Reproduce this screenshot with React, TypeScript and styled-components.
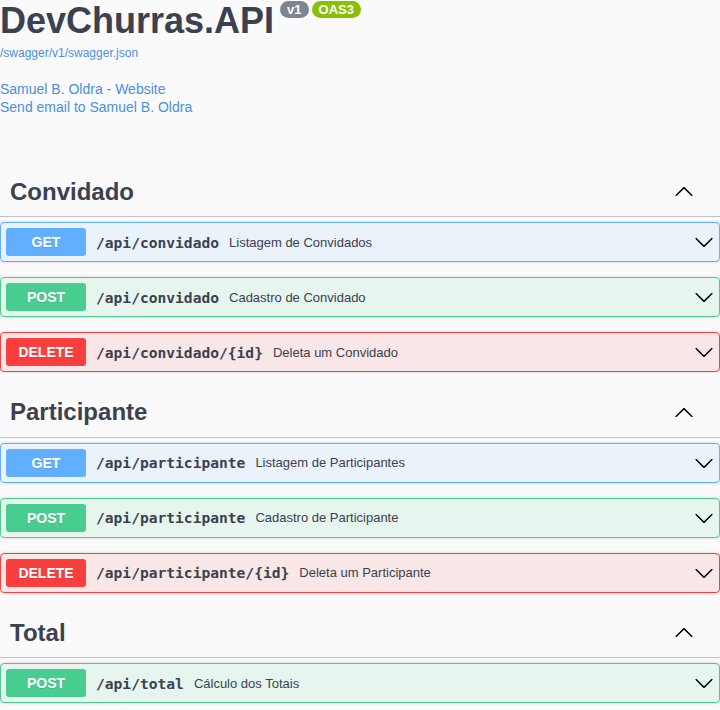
import React from "react";
import styled, { createGlobalStyle } from "styled-components";

const Global = createGlobalStyle`
  html, body { margin: 0; padding: 0; background: #fafafa; }
  body { font-family: "Liberation Sans", Arial, sans-serif; color: #3b4151; }
`;

const Page = styled.div`
  width: 720px;
  background: #fafafa;
`;

const Info = styled.div`
  margin: 0 0 50.5px;
`;

const TitleRow = styled.h2`
  display: flex;
  align-items: flex-start;
  margin: 0;
  font-size: 36px;
  font-weight: 700;
  line-height: 41px;
  color: #3b4151;
`;

const Badge = styled.span<{ $bg: string; $gap: number }>`
  display: inline-block;
  margin: 1px 0 0 ${(p) => p.$gap}px;
  padding: 1px 7px;
  border-radius: 57px;
  background: ${(p) => p.$bg};
  color: #fff;
  font-size: 13px;
  font-weight: 700;
  line-height: 15px;
`;

const SpecLink = styled.a`
  display: block;
  margin-top: 5px;
  font-size: 12px;
  line-height: 14px;
  color: #4990e2;
  text-decoration: none;
`;

const Contact = styled.div`
  margin-top: 20px;
  font-size: 14px;
  line-height: 18px;
`;

const ContactLink = styled.a`
  display: block;
  color: #4990e2;
  text-decoration: none;
`;

const TagHeader = styled.div`
  display: flex;
  align-items: center;
  justify-content: space-between;
  padding: 10px 20px 10px 10px;
  margin: 0 0 5px;
  border-bottom: 1px solid rgba(59, 65, 81, 0.3);
`;

const TagTitle = styled.h3`
  margin: 0;
  font-size: 24px;
  line-height: 29.5px;
  font-weight: 700;
  color: #3b4151;
`;

const ArrowButton = styled.button`
  display: flex;
  align-items: center;
  padding: 0 6px;
  border: none;
  background: none;
  color: #000;
`;

const methodColors: Record<string, string> = {
  GET: "#61affe",
  POST: "#49cc90",
  DELETE: "#f93e3e",
};

const methodBg: Record<string, string> = {
  GET: "rgba(97, 175, 254, 0.1)",
  POST: "rgba(73, 204, 144, 0.1)",
  DELETE: "rgba(249, 62, 62, 0.1)",
};

const OpBlock = styled.div<{ $m: string }>`
  margin: 0 0 15px;
  border: 1px solid ${(p) => methodColors[p.$m]};
  border-radius: 4px;
  background: ${(p) => methodBg[p.$m]};
  box-shadow: 0 0 3px rgba(0, 0, 0, 0.19);
`;

const Summary = styled.div`
  display: flex;
  align-items: center;
  padding: 5px;
`;

const Method = styled.span<{ $m: string }>`
  min-width: 80px;
  padding: 6px 0;
  border-radius: 3px;
  background: ${(p) => methodColors[p.$m]};
  color: #fff;
  font-size: 14px;
  font-weight: 700;
  line-height: 16px;
  text-align: center;
  text-shadow: 0 1px 0 rgba(0, 0, 0, 0.1);
`;

const Path = styled.span`
  padding: 0 10px;
  font-family: "DejaVu Sans Mono", "Liberation Mono", monospace;
  font-size: 14.6px;
  font-weight: 700;
  color: #3b4151;
`;

const Desc = styled.span`
  flex: 1;
  font-size: 13px;
  color: #3b4151;
`;

const ArrowIcon = styled.svg`
  flex: none;
  fill: currentColor;
  color: #000;
`;

const Down = () => (
  <ArrowIcon width="20" height="20" viewBox="0 0 20 20">
    <path d="M17.418 6.109c.272-.268.709-.268.979 0s.271.701 0 .969l-7.908 7.83c-.27.268-.707.268-.979 0l-7.908-7.83c-.27-.268-.27-.701 0-.969.271-.268.709-.268.979 0L10 13.25l7.418-7.141z" />
  </ArrowIcon>
);

const Up = () => (
  <ArrowIcon width="20" height="20" viewBox="0 0 20 20">
    <path d="M17.418 14.908c.272.268.709.268.979 0s.271-.701 0-.969l-7.908-7.83c-.27-.268-.707-.268-.979 0l-7.908 7.830c-.27.268-.27.701 0 .969.271.268.709.268.979 0L10 7.767l7.418 7.141z" />
  </ArrowIcon>
);

type Op = { method: string; path: string; desc: string };
type Tag = { name: string; ops: Op[] };

const tags: Tag[] = [
  {
    name: "Convidado",
    ops: [
      { method: "GET", path: "/api/convidado", desc: "Listagem de Convidados" },
      { method: "POST", path: "/api/convidado", desc: "Cadastro de Convidado" },
      { method: "DELETE", path: "/api/convidado/{id}", desc: "Deleta um Convidado" },
    ],
  },
  {
    name: "Participante",
    ops: [
      { method: "GET", path: "/api/participante", desc: "Listagem de Participantes" },
      { method: "POST", path: "/api/participante", desc: "Cadastro de Participante" },
      { method: "DELETE", path: "/api/participante/{id}", desc: "Deleta um Participante" },
    ],
  },
  {
    name: "Total",
    ops: [{ method: "POST", path: "/api/total", desc: "Cálculo dos Totais" }],
  },
];

export default function App() {
  return (
    <Page>
      <Global />
      <Info>
        <TitleRow>
          DevChurras.API
          <Badge $bg="#7d8492" $gap={6}>v1</Badge>
          <Badge $bg="#89bf04" $gap={3}>OAS3</Badge>
        </TitleRow>
        <SpecLink href="#">/swagger/v1/swagger.json</SpecLink>
        <Contact>
          <ContactLink href="#">Samuel B. Oldra - Website</ContactLink>
          <ContactLink href="#">Send email to Samuel B. Oldra</ContactLink>
        </Contact>
      </Info>
      {tags.map((t) => (
        <section key={t.name}>
          <TagHeader>
            <TagTitle>{t.name}</TagTitle>
            <ArrowButton>
              <Up />
            </ArrowButton>
          </TagHeader>
          {t.ops.map((o) => (
            <OpBlock key={o.method + o.path} $m={o.method}>
              <Summary>
                <Method $m={o.method}>{o.method}</Method>
                <Path>{o.path}</Path>
                <Desc>{o.desc}</Desc>
                <Down />
              </Summary>
            </OpBlock>
          ))}
        </section>
      ))}
    </Page>
  );
}
